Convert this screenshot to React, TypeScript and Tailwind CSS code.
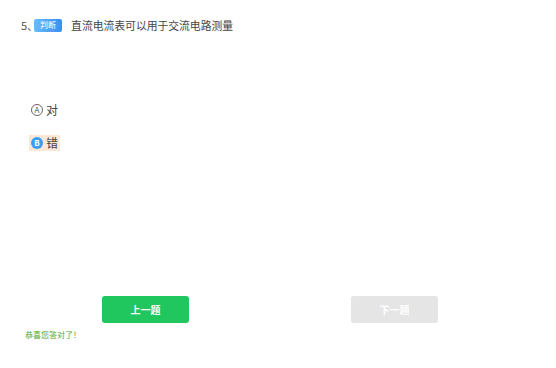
export default function App() {
  return (
    <div
      className="relative h-[368px] w-[556px] bg-white text-[#333]"
      style={{ fontFamily: '"Noto Sans CJK SC", "Noto Sans", sans-serif' }}
    >
      <div className="flex items-center pl-[21px] pt-[17px]">
        <span className="text-[11px] leading-[16px] text-[#555]">5、</span>
        <span className="ml-[-4px] flex h-[13px] w-[28px] items-center justify-center rounded-[2px] bg-gradient-to-r from-[#64bdfd] to-[#3b8ef3] text-[8px] leading-none text-white">
          判断
        </span>
        <span className="ml-[9px] text-[10.8px] leading-[16px] text-[#444]">
          直流电流表可以用于交流电路测量
        </span>
      </div>

      <div className="mt-[69px] flex flex-col gap-[17px] pl-[29px]">
        <div className="flex h-[16px] items-center pl-[2px]">
          <span className="flex h-[12px] w-[12px] items-center justify-center rounded-full border border-[#666] text-[8px] leading-none text-[#555]">
            A
          </span>
          <span className="ml-[3px] text-[12px] leading-none text-[#444]">对</span>
        </div>
        <div className="flex h-[16px] w-[31px] items-center bg-[#fde8d8] pl-[2px]">
          <span className="flex h-[12px] w-[12px] items-center justify-center rounded-full bg-[#3d9df4] text-[8px] font-bold leading-none text-white">
            B
          </span>
          <span className="ml-[3px] text-[12px] leading-none text-[#444]">错</span>
        </div>
      </div>

      <div className="absolute left-0 top-[296px] flex w-full">
        <div className="ml-[102px] flex h-[27px] w-[87px] items-center justify-center rounded-[3px] bg-[#20c65e] text-[10px] font-bold text-white">
          上一题
        </div>
        <div className="ml-[162px] flex h-[27px] w-[87px] items-center justify-center rounded-[3px] bg-[#e5e5e5] text-[10px] font-bold text-white">
          下一题
        </div>
      </div>
      <div className="absolute left-[25px] top-[330px] text-[8px] leading-[10px] text-[#4ea832]">
        恭喜您答对了！
      </div>
    </div>
  );
}
